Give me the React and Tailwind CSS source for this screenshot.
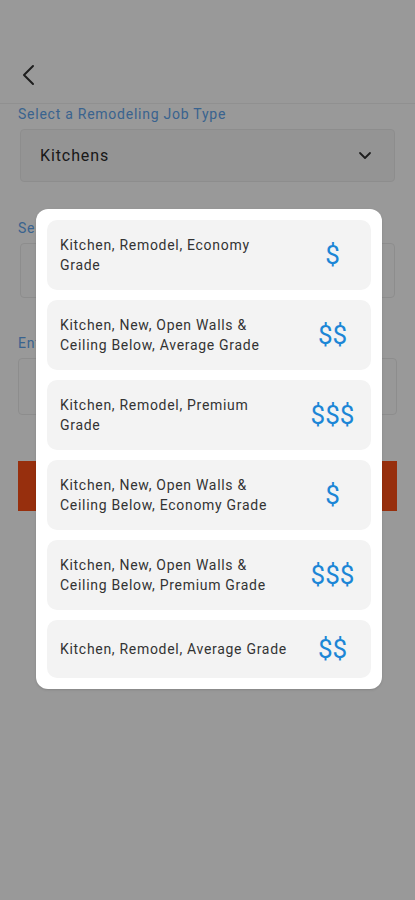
import React from 'react';

const options = [
  { label: 'Kitchen, Remodel, Economy Grade', price: '$' },
  { label: 'Kitchen, New, Open Walls & Ceiling Below, Average Grade', price: '$$' },
  { label: 'Kitchen, Remodel, Premium Grade', price: '$$$' },
  { label: 'Kitchen, New, Open Walls & Ceiling Below, Economy Grade', price: '$' },
  { label: 'Kitchen, New, Open Walls & Ceiling Below, Premium Grade', price: '$$$' },
  { label: 'Kitchen, Remodel, Average Grade', price: '$$' }
];

const App = () => {
  return (
    <div className="relative min-h-[900px] w-[415px] bg-white font-['Roboto',sans-serif] overflow-hidden">
      {/* header */}
      <div className="h-[104px] border-b border-[#f0f0f0] flex items-end pb-[17px] pl-[20px]">
        <svg width="18" height="22" viewBox="0 0 18 22" fill="none">
          <path d="M13 2 L4 11 L13 20" stroke="#333" strokeWidth="2" strokeLinecap="round" strokeLinejoin="round" />
        </svg>
      </div>

      <div className="px-[18px]">
        <p className="text-[14px] leading-[20px] tracking-[0.75px] text-[#5fa6ee]">Select a Remodeling Job Type</p>
        <div className="mx-[2px] mt-[5px] h-[53px] rounded-[4px] border border-[#ececec] bg-[#f7f7f7] flex items-center justify-between pl-[19px] pr-[22px]">
          <span className="text-[16px] tracking-[0.9px] text-[#2b2b2b]">Kitchens</span>
          <svg width="14" height="9" viewBox="0 0 14 9" fill="none">
            <path d="M2 2 L7 7 L12 2" stroke="#333" strokeWidth="1.8" strokeLinecap="round" strokeLinejoin="round" />
          </svg>
        </div>

        <p className="mt-[36px] text-[14px] leading-[20px] tracking-[0.75px] text-[#5fa6ee]">Select a Grade</p>
        <div className="mx-[2px] mt-[5px] h-[55px] rounded-[4px] border border-[#ececec] bg-[#fdfdfd]" />

        <p className="mt-[35px] text-[14px] leading-[20px] tracking-[0.75px] text-[#5fa6ee]">Enter Square Footage</p>
        <div className="mt-[5px] h-[57px] rounded-[4px] border border-[#ececec] bg-[#fdfdfd]" />

        <button className="mt-[46px] h-[50px] w-full bg-[#fc4f17] text-white text-[16px]">Calculate</button>
      </div>

      {/* overlay */}
      <div className="absolute inset-0 bg-black/40">
        <div className="absolute left-[36px] top-[209px] w-[346px] rounded-[12px] bg-white p-[11px] flex flex-col gap-[10px] shadow-sm">
          {options.map((o, i) => (
            <div key={i} className="min-h-[58px] rounded-[10px] bg-[#f3f3f3] py-[15px] pl-[13px] flex items-center">
              <span className="w-[230px] text-[14px] leading-[20px] tracking-[0.7px] text-[#333]">{o.label}</span>
              <span className="flex-1 pl-[4px] text-center text-[26px] leading-[28px] text-[#1c86d6]">{o.price}</span>
            </div>
          ))}
        </div>
      </div>
    </div>
  );
};

export default App;
